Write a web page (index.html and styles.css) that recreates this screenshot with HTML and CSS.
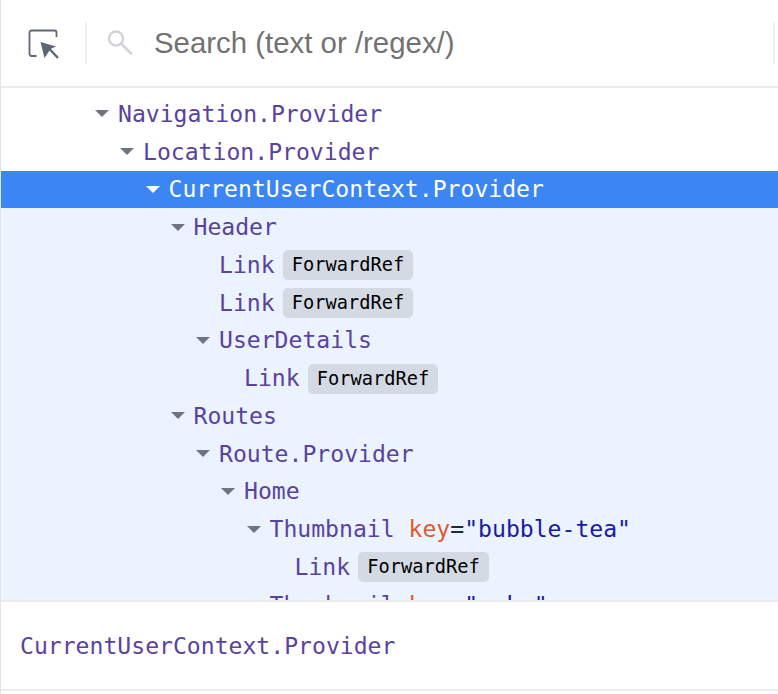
FILE: index.html
```html
<!DOCTYPE html>
<html lang="en">
<head>
    <meta charset="UTF-8">
    <meta name="viewport" content="width=device-width, initial-scale=1.0">
    <title>Components</title>
    <link rel="stylesheet" href="styles.css">
</head>
<body>
    <div class="panel">
        <div class="toolbar">
            <button class="inspect-btn" aria-label="Select an element">
                <svg width="32" height="32" viewBox="0 0 32 32">
                    <path d="M8.5 29H3.5a2 2 0 0 1-2-2V5.5a2 2 0 0 1 2-2h23a2 2 0 0 1 2 2v4.5" fill="none" stroke="#5f6673" stroke-width="1.8"/>
                    <path d="M12.5 15 28 19.5 22.5 22 16.5 31Z" fill="#5f6673"/>
                    <path d="M20.5 21 30 31" stroke="#5f6673" stroke-width="2.4"/>
                </svg>
            </button>
            <div class="divider"></div>
            <svg class="search-icon" width="26" height="26" viewBox="0 0 26 26">
                <circle cx="9" cy="8.5" r="7" fill="none" stroke="#d2d3d8" stroke-width="2.4"/>
                <path d="M14.5 14 24 23.5" stroke="#d2d3d8" stroke-width="2.6" stroke-linecap="round"/>
            </svg>
            <span class="search-text">Search (text or /regex/)</span>
            <div class="divider divider-end"></div>
        </div>

        <div class="tree">
            <div class="row depth-0"><span class="arrow"></span><span class="name">Navigation.Provider</span></div>
            <div class="row depth-1"><span class="arrow"></span><span class="name">Location.Provider</span></div>
            <div class="row depth-2 selected"><span class="arrow"></span><span class="name">CurrentUserContext.Provider</span></div>
            <div class="row depth-3 inside"><span class="arrow"></span><span class="name">Header</span></div>
            <div class="row depth-4 inside"><span class="spacer"></span><span class="name">Link</span><span class="badge">ForwardRef</span></div>
            <div class="row depth-4 inside"><span class="spacer"></span><span class="name">Link</span><span class="badge">ForwardRef</span></div>
            <div class="row depth-4 inside"><span class="arrow"></span><span class="name">UserDetails</span></div>
            <div class="row depth-5 inside"><span class="spacer"></span><span class="name">Link</span><span class="badge">ForwardRef</span></div>
            <div class="row depth-3 inside"><span class="arrow"></span><span class="name">Routes</span></div>
            <div class="row depth-4 inside"><span class="arrow"></span><span class="name">Route.Provider</span></div>
            <div class="row depth-5 inside"><span class="arrow"></span><span class="name">Home</span></div>
            <div class="row depth-6 inside"><span class="arrow"></span><span class="name">Thumbnail</span>&nbsp;<span class="key">key</span>=<span class="value">"bubble-tea"</span></div>
            <div class="row depth-7 inside"><span class="spacer"></span><span class="name">Link</span><span class="badge">ForwardRef</span></div>
            <div class="row depth-6 inside"><span class="arrow"></span><span class="name">Thumbnail</span>&nbsp;<span class="key">key</span>=<span class="value">"cake"</span></div>
        </div>

        <div class="selected-bar">
            <span class="name">CurrentUserContext.Provider</span>
        </div>
    </div>
</body>
</html>
```

FILE: styles.css
```css
html, body {
    margin: 0;
    height: 100%;
    background: #fff;
}

.panel {
    display: flex;
    flex-direction: column;
    height: 694px;
    overflow: hidden;
    border-left: 1px solid #e4e4e6;
    box-sizing: border-box;
}

.toolbar {
    display: flex;
    align-items: center;
    flex: none;
    height: 86px;
    padding-left: 27px;
    border-bottom: 2px solid #ebebeb;
}

.inspect-btn {
    display: flex;
    width: 32px;
    height: 32px;
    padding: 0;
    border: none;
    background: none;
}

.divider {
    width: 2px;
    height: 42px;
    margin-left: 25px;
    background: #efefef;
}

.divider-end {
    margin-left: auto;
    margin-right: 3px;
}

.search-icon {
    margin-left: 19.5px;
}

.search-text {
    margin-left: 21.5px;
    font-family: "Liberation Sans", Arial, sans-serif;
    font-size: 29.4px;
    color: #727272;
}

.tree {
    flex: 1;
    min-height: 0;
    overflow: hidden;
    padding-top: 7px;
    font-family: "DejaVu Sans Mono", monospace;
    font-size: 23.1px;
    color: #23272f;
}

.row {
    display: flex;
    align-items: center;
    height: 37.75px;
    white-space: pre;
}

.depth-0 { padding-left: 94px; }
.depth-1 { padding-left: 119px; }
.depth-2 { padding-left: 144.5px; }
.depth-3 { padding-left: 169.5px; }
.depth-4 { padding-left: 195px; }
.depth-5 { padding-left: 220px; }
.depth-6 { padding-left: 245.5px; }
.depth-7 { padding-left: 270.5px; }

.arrow, .spacer {
    flex: none;
    width: 23px;
}

.arrow::before {
    content: "";
    display: block;
    width: 0;
    height: 0;
    border-left: 7px solid transparent;
    border-right: 7px solid transparent;
    border-top: 7px solid #6e7480;
}

.name {
    color: #5a429f;
}

.key {
    color: #e0592a;
}

.value {
    color: #1a1aa6;
}

.inside {
    background: #ebf3fe;
}

.selected {
    background: #3b86f2;
}

.selected .name {
    color: #fff;
}

.selected .arrow::before {
    border-top-color: #fff;
}

.badge {
    margin-left: 8px;
    margin-top: 1px;
    padding: 0 9px;
    height: 30px;
    line-height: 30px;
    border-radius: 5px;
    background: #d3dae4;
    color: #000;
    font-size: 18.7px;
}

.selected-bar {
    flex: none;
    display: flex;
    align-items: center;
    box-sizing: border-box;
    height: 91px;
    margin-bottom: 3px;
    padding-left: 19px;
    background: #fff;
    border-top: 2px solid #ebebeb;
    border-bottom: 2px solid #ebebeb;
    font-family: "DejaVu Sans Mono", monospace;
    font-size: 23.1px;
}
```
